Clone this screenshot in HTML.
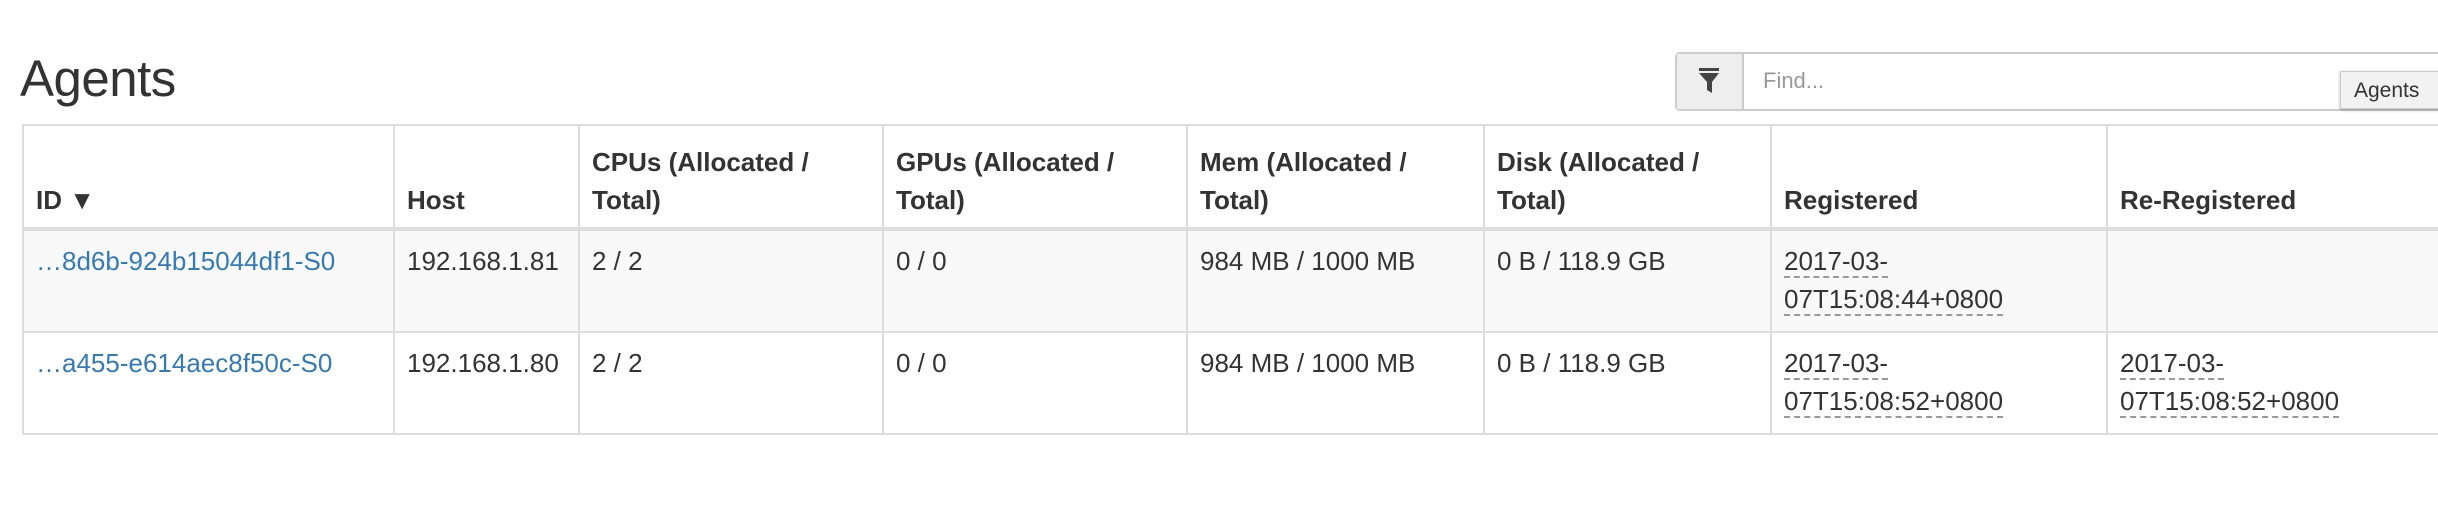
<!DOCTYPE html>
<html><head><meta charset="utf-8"><style>
body{margin:0;width:2438px;height:526px;overflow:hidden;background:#fff;font-family:"Liberation Sans",Helvetica,Arial,sans-serif;color:#333;position:relative}
h1{position:absolute;left:20px;top:48px;margin:0;font-size:51px;font-weight:normal;line-height:62px;letter-spacing:-0.5px}
.search{position:absolute;left:1675px;top:52px;width:800px;height:59px;border:2px solid #ccc;border-radius:5px;box-sizing:border-box}
.addon{position:absolute;left:0;top:0;width:65px;height:100%;background:#eee;border-right:2px solid #ccc}
.find{position:absolute;left:86px;top:14px;font-size:22px;color:#999}
.tip{position:absolute;left:2340px;top:71px;width:110px;height:38px;background:#f2f2f2;border:1px solid #ccc;box-shadow:0 1px 3px rgba(0,0,0,.3);font-size:21px;line-height:38px;padding-left:13px;box-sizing:border-box}
table{position:absolute;left:22px;top:124px;border-collapse:collapse;table-layout:fixed;width:2460px;font-size:26px;line-height:38px}
td,th{border:2px solid #ddd;padding:6px 12px;text-align:left;vertical-align:top}
th{vertical-align:bottom;font-weight:bold;border-bottom:4px solid #ddd;height:87px;padding-bottom:8px}
td{height:85px;padding-top:11px;padding-bottom:4px}
tr.odd td{background:#f9f9f9}
a{color:#337ab7;text-decoration:none}
.d{border-bottom:2px dashed #999}
</style></head><body>
<h1>Agents</h1>
<div class="search"><div class="addon"><svg width="65" height="55" viewBox="0 0 65 55"><rect x="22" y="14" width="20" height="3" fill="#444"/><path d="M22 19 H42 L35 28 V39 L30 36 V28 Z" fill="#444"/></svg></div><div class="find">Find...</div></div>
<div class="tip">Agents</div>
<table>
<colgroup><col style="width:371px"><col style="width:185px"><col style="width:304px"><col style="width:304px"><col style="width:297px"><col style="width:287px"><col style="width:336px"><col style="width:376px"></colgroup>
<tr><th>ID ▼</th><th>Host</th><th>CPUs (Allocated /<br>Total)</th><th>GPUs (Allocated /<br>Total)</th><th>Mem (Allocated /<br>Total)</th><th>Disk (Allocated /<br>Total)</th><th>Registered</th><th>Re-Registered</th></tr>
<tr class="odd"><td><a>…8d6b-924b15044df1-S0</a></td><td>192.168.1.81</td><td>2 / 2</td><td>0 / 0</td><td>984 MB / 1000 MB</td><td>0 B / 118.9 GB</td><td><span class="d">2017-03-</span><br><span class="d">07T15:08:44+0800</span></td><td></td></tr>
<tr><td><a>…a455-e614aec8f50c-S0</a></td><td>192.168.1.80</td><td>2 / 2</td><td>0 / 0</td><td>984 MB / 1000 MB</td><td>0 B / 118.9 GB</td><td><span class="d">2017-03-</span><br><span class="d">07T15:08:52+0800</span></td><td><span class="d">2017-03-</span><br><span class="d">07T15:08:52+0800</span></td></tr>
</table>
</body></html>
